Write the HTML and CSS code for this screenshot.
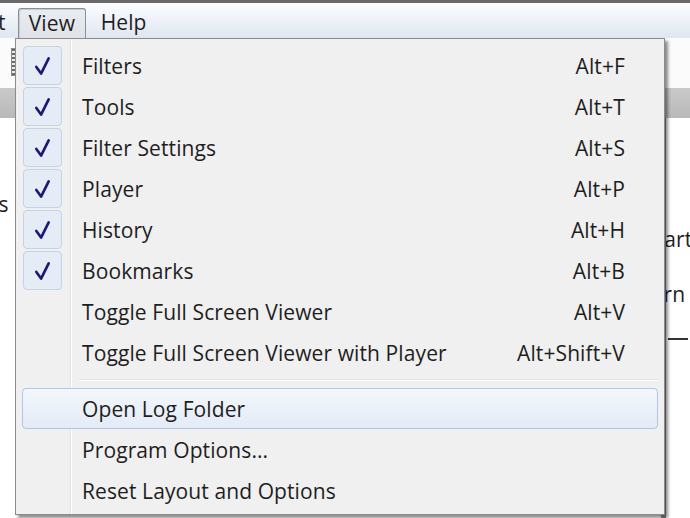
FILE: index.html
```html
<!DOCTYPE html>
<html lang="en">
<head>
  <meta charset="UTF-8" />
  <title>View menu</title>
  <link rel="stylesheet" href="styles.css">
</head>
<body>
  <div class="window">
    <div class="menubar">
      <span class="bar-item cut">Edit</span>
      <span class="bar-item open">View</span>
      <span class="bar-item">Help</span>
    </div>

    <div class="workspace">
      <div class="toolbar">
        <span class="grip"></span>
      </div>
      <div class="band"></div>
      <div class="panels">
        <div class="panel-left"><span class="frag-s">Tools</span></div>
        <div class="panel-right">
          <span class="frag">Start</span>
          <span class="frag second">Return</span>
          <span class="rule"></span>
        </div>
      </div>
    </div>

    <div class="menu">
      <ul class="items">
        <li class="item checked"><span class="check"><svg viewBox="0 0 20 22"><path d="M3.5 12 L8.5 19 L16.5 3" /></svg></span><span class="label">Filters</span><span class="key">Alt+F</span></li>
        <li class="item checked"><span class="check"><svg viewBox="0 0 20 22"><path d="M3.5 12 L8.5 19 L16.5 3" /></svg></span><span class="label">Tools</span><span class="key">Alt+T</span></li>
        <li class="item checked"><span class="check"><svg viewBox="0 0 20 22"><path d="M3.5 12 L8.5 19 L16.5 3" /></svg></span><span class="label">Filter Settings</span><span class="key">Alt+S</span></li>
        <li class="item checked"><span class="check"><svg viewBox="0 0 20 22"><path d="M3.5 12 L8.5 19 L16.5 3" /></svg></span><span class="label">Player</span><span class="key">Alt+P</span></li>
        <li class="item checked"><span class="check"><svg viewBox="0 0 20 22"><path d="M3.5 12 L8.5 19 L16.5 3" /></svg></span><span class="label">History</span><span class="key">Alt+H</span></li>
        <li class="item checked"><span class="check"><svg viewBox="0 0 20 22"><path d="M3.5 12 L8.5 19 L16.5 3" /></svg></span><span class="label">Bookmarks</span><span class="key">Alt+B</span></li>
        <li class="item"><span class="check"></span><span class="label">Toggle Full Screen Viewer</span><span class="key">Alt+V</span></li>
        <li class="item"><span class="check"></span><span class="label">Toggle Full Screen Viewer with Player</span><span class="key">Alt+Shift+V</span></li>
        <li class="separator"></li>
        <li class="item hover"><span class="check"></span><span class="label">Open Log Folder</span><span class="key"></span></li>
        <li class="item"><span class="check"></span><span class="label">Program Options...</span><span class="key"></span></li>
        <li class="item"><span class="check"></span><span class="label">Reset Layout and Options</span><span class="key"></span></li>
      </ul>
    </div>
  </div>
</body>
</html>
```

FILE: styles.css
```css
html, body {
  margin: 0;
  padding: 0;
}

body {
  width: 690px;
  height: 518px;
  overflow: hidden;
  font-family: "Open Sans", "Noto Sans", sans-serif;
  font-size: 21px;
  letter-spacing: 0.1px;
  color: #1e1e1e;
  background: #fff;
}

.window {
  position: relative;
  width: 690px;
  height: 518px;
  display: flex;
  flex-direction: column;
  border-top: 3px solid #6a6a6a;
  box-sizing: border-box;
}

.menubar {
  height: 35px;
  display: flex;
  align-items: flex-end;
  background: linear-gradient(#fcfdfe 0%, #f3f6fb 30%, #dfe6ef 100%);
  position: relative;
}

.bar-item {
  height: 30px;
  line-height: 28px;
  padding: 0 15px;
  box-sizing: border-box;
}

.bar-item.cut {
  margin-left: -47px;
  padding-right: 12px;
}

.bar-item.open {
  width: 68px;
  padding: 0 0 0 10px;
  border: 1px solid #8e8f8f;
  border-bottom: none;
  border-radius: 3px 3px 0 0;
  background: linear-gradient(#e9edf2, #dfe3e8);
  box-shadow: inset 1px 1px 0 #c6cbd1;
}

.workspace {
  flex: 1;
  display: flex;
  flex-direction: column;
}

.toolbar {
  height: 50px;
  background: #fbfbfb;
  padding: 10px 0 0 11px;
  box-sizing: border-box;
}

.grip {
  display: block;
  width: 4px;
  height: 26px;
  background: repeating-linear-gradient(#6b6b6b 0 2px, #e9e9e9 2px 4px);
  border: 1px solid #8a8a8a;
}

.band {
  height: 30px;
  background: linear-gradient(#c9c9c9, #b9b9b9);
}

.panels {
  flex: 1;
  display: flex;
  justify-content: space-between;
  background: #fff;
}

.panel-left {
  width: 30px;
  margin-left: -44px;
  padding-top: 72px;
}

.panel-right {
  width: 22px;
  padding-top: 107px;
  display: flex;
  flex-direction: column;
  overflow: hidden;
  border-left: 5px solid #8f8f8f;
  padding-left: 2px;
}

.frag {
  margin-left: -23px;
  white-space: nowrap;
}

.frag.second {
  margin-left: -50px;
  margin-top: 27px;
}

.rule {
  display: block;
  width: 20px;
  height: 2px;
  background: #333;
  margin-top: 30px;
}

/* dropdown over the workspace */
.menu {
  position: absolute;
  left: 15px;
  top: 35px;
  width: 650px;
  height: 477px;
  box-sizing: border-box;
  border: 1px solid #8c8c8c;
  background: linear-gradient(to right, #f0f0f0 54px, #e2e3e3 54px, #e2e3e3 55px, #ffffff 55px, #ffffff 56px, #f0f0f0 56px);
  box-shadow: 3px 3px 3px rgba(0, 0, 0, 0.45);
  padding: 6px 6px 0 6px;
}

.items {
  list-style: none;
  margin: 0;
  padding: 0;
}

.item {
  height: 41px;
  display: flex;
  align-items: center;
  box-sizing: border-box;
  border: 1px solid transparent;
  border-radius: 4px;
}

.check {
  width: 39px;
  height: 39px;
  flex: none;
  box-sizing: border-box;
  display: flex;
  align-items: center;
  justify-content: center;
}

.checked .check {
  border: 1px solid #c5d3e6;
  border-radius: 4px;
  background: #e5ecf6;
}

.check svg {
  width: 19px;
  height: 22px;
}

.check path {
  fill: none;
  stroke: #1c1a76;
  stroke-width: 2.8;
  stroke-linecap: round;
  stroke-linejoin: round;
}

.label {
  margin-left: 20px;
  flex: 1;
  white-space: nowrap;
}

.key {
  margin-right: 32px;
  white-space: nowrap;
}

.separator {
  height: 2px;
  margin: 6px 0 7px 57px;
  border-top: 1px solid #e0e0e0;
  background: #fff;
  box-sizing: border-box;
}

.item.hover {
  border-color: #aec6e8;
  background: linear-gradient(#f4f7fc, #e3ebf6);
}
```
